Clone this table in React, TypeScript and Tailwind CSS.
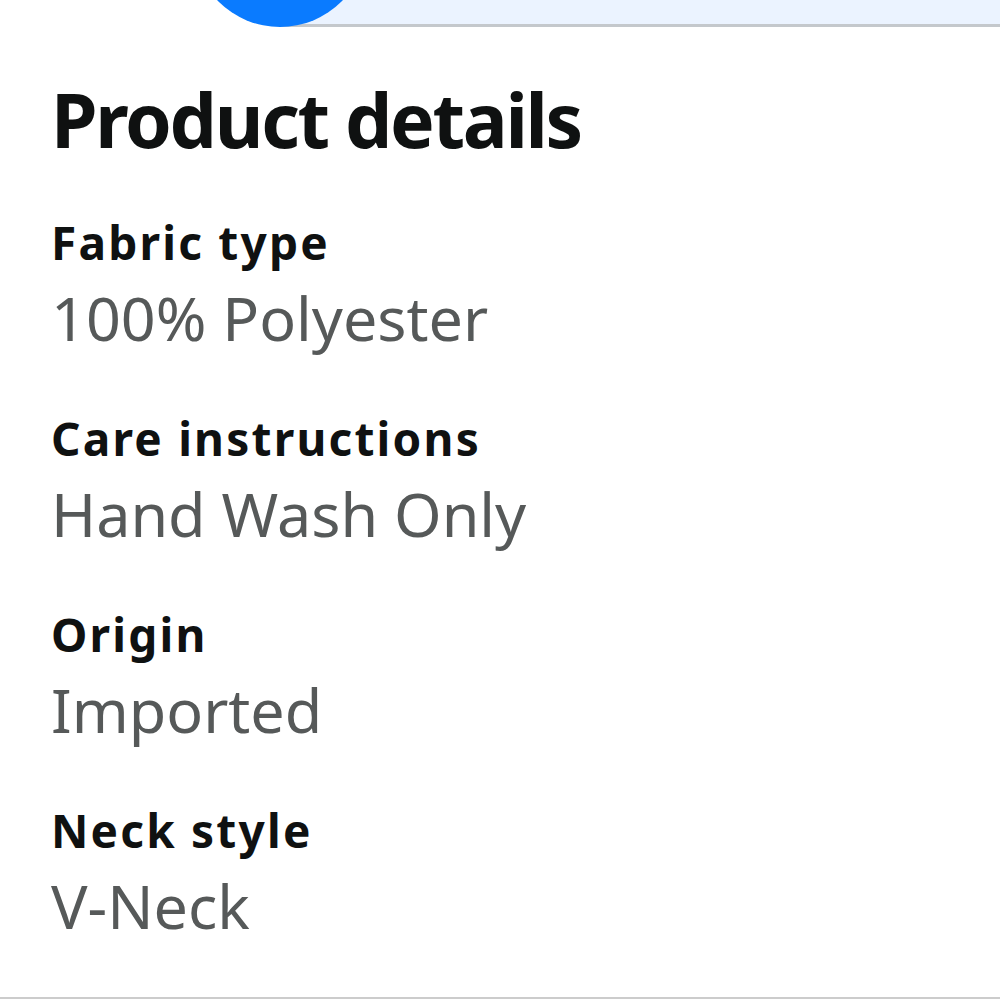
const details = [
  { label: "Fabric type", value: "100% Polyester" },
  { label: "Care instructions", value: "Hand Wash Only" },
  { label: "Origin", value: "Imported" },
  { label: "Neck style", value: "V-Neck" },
];

const App = () => {
  return (
    <div
      className="relative h-[999px] overflow-hidden bg-white border-b-2 border-[#cccccc]"
      style={{ fontFamily: '"Noto Sans", "Open Sans", Arial, sans-serif' }}
    >
      {/* top strip, cut off by the viewport */}
      <div className="flex h-[27px]">
        <div className="w-[280px]" />
        <div className="flex-1 bg-[#ebf3ff] border-b-[3px] border-[#c4c8cc]" />
      </div>
      <div className="absolute left-[193px] top-[-60px] w-[174px] h-[87px] rounded-b-full bg-[#0a7bff]" />

      {/* Product details */}
      <div className="pl-[51px] pt-[52px]">
        <h1 className="text-[75px] leading-[80px] font-bold text-[#0f1111] tracking-[-2.3px]">
          Product details
        </h1>
        <div className="mt-[55px] flex flex-col gap-[56px]">
          {details.map((item) => (
            <div key={item.label} className="flex flex-col gap-[12px]">
              <div className="text-[46px] leading-[56px] font-bold text-[#0f1111] tracking-[2.2px]">
                {item.label}
              </div>
              <div className="text-[61px] leading-[72px] text-[#565959]">
                {item.value}
              </div>
            </div>
          ))}
        </div>
      </div>
    </div>
  );
};

export default App;
